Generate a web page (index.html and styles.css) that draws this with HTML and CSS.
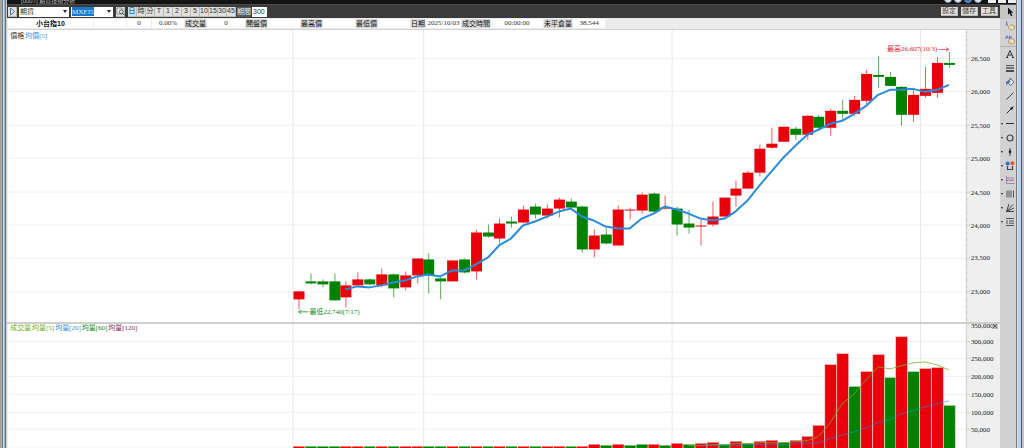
FILE: index.html
```html
<!DOCTYPE html>
<html lang="zh-Hant">
<head>
    <meta charset="UTF-8">
    <title>期貨技術分析</title>
    <link rel="stylesheet" href="styles.css">
</head>
<body>
<div class="window">
    <div class="frame frame-left"></div>
    <div class="pane">
        <header class="title-bar">
            <span class="title-text">[0007] 期貨技術分析</span>
            <div class="title-btns">
                <i class="dot"></i><i class="dot"></i><i class="dot blue"></i><i class="dot"></i>
                <i class="box first"></i><i class="box"></i><i class="box"></i>
            </div>
        </header>
        <div class="work">
            <main class="main">
                <div class="toolbar">
                    <button class="btn play" aria-label="播放">
                        <svg viewBox="0 0 9 9"><path d="M2.5 1v7l4-3.5z" fill="#dff0ff" stroke="#1d4f86" stroke-width=".8"/></svg>
                    </button>
                    <div class="combo combo-kind">
                        <select aria-label="類別"><option>期貨</option></select>
                        <i class="arrow"></i>
                    </div>
                    <div class="combo combo-code">
                        <input class="selected" type="text" value="MXFJ5" aria-label="商品代碼">
                        <i class="arrow"></i>
                    </div>
                    <button class="btn find" aria-label="查詢">
                        <svg viewBox="0 0 9 9"><path d="M1 1h5v6H1z" fill="#f7f7f7" stroke="#666" stroke-width=".7"/><circle cx="5.2" cy="4.8" r="2" fill="#cfe6d8" stroke="#445" stroke-width=".8"/><path d="M6.6 6.3l2 2" stroke="#333"/></svg>
                    </button>
                    <div class="periods">
                        <button class="btn on">日</button>
                        <button class="btn">時</button>
                        <button class="btn">分</button>
                        <button class="btn">T</button>
                        <button class="btn">1</button>
                        <button class="btn">2</button>
                        <button class="btn">3</button>
                        <button class="btn">5</button>
                        <button class="btn">10</button>
                        <button class="btn">15</button>
                        <button class="btn">30</button>
                        <button class="btn">45</button>
                    </div>
                    <label class="range"><span>期間</span> <input type="text" value="300"></label>
                    <div class="actions">
                        <button class="btn">設定</button>
                        <button class="btn">儲存</button>
                        <button class="btn">工具</button>
                    </div>
                </div>
                <div class="quote">
                    <b class="val name">小台指10</b>
                    <span class="val w32"></span>
                    <span class="val w24">0</span>
                    <span class="val w32">0.00%</span>
                    <span class="key">成交量</span><span class="val w38">0</span>
                    <span class="key">開盤價</span><span class="val w32"></span>
                    <span class="key">最高價</span><span class="val w32"></span>
                    <span class="key">最低價</span><span class="val w32"></span>
                    <span class="key date">日期</span><span class="val w35">2025/10/03</span>
                    <span class="key long">成交時間</span><span class="val w52">00:00:00</span>
                    <span class="key long">未平倉量</span><span class="val w32">38,544</span>
                </div>
                <svg class="chart" id="price" viewBox="7 29 993 293">
                    <text class="legend" x="9" y="37"><tspan fill="#333">價格</tspan><tspan fill="#2f8fdc" dx="1">均價[5]</tspan></text>
                </svg>
                <div class="split"></div>
                <svg class="chart" id="volume" viewBox="7 324 993 124">
                    <text class="legend" x="9" y="330"><tspan fill="#6fae1c">成交量</tspan><tspan fill="#6fae1c" dx="1">均量[5]</tspan><tspan fill="#2f8fdc" dx="1">均量[20]</tspan><tspan fill="#0f8a1e" dx="1">均量[60]</tspan><tspan fill="#8e2560" dx="1">均量[120]</tspan></text>
                </svg>
            </main>
            <nav class="tools">
                <button class="tool active" aria-label="選取"><svg viewBox="0 0 10 10"><path d="M3 .5v7.2l1.7-1.5L6 9.3l1.4-.7L6 5.700h2.300z" fill="#111"/></svg></button>
                <button class="tool" aria-label="刪除一條"><svg viewBox="0 0 10 10"><path d="M3.500 6L6 3.500l3.500 1.700v2L7 9.200 3.500 7.500z" fill="#f5dfb2" stroke="#a07c45" stroke-width=".7"/><path d="M1.800.5v3.500M.8 4h2" stroke="#5a62c8"/></svg></button>
                <button class="tool line-below" aria-label="刪除全部"><svg viewBox="0 0 10 10"><path d="M3.500 6L6 3.500l3.500 1.700v2L7 9.200 3.500 7.500z" fill="#f5dfb2" stroke="#a07c45" stroke-width=".7"/><path d="M.5 3.800L2 .8l1.300 3M4.500.8v3M6 .8v2.500" stroke="#5a62c8" fill="none"/></svg></button>
                <button class="tool" aria-label="文字"><svg viewBox="0 0 10 10"><path d="M1.800 8.500L5 1.500l3.200 7M3 6h4M1 8.500h2M7 8.500h2" stroke="#333" fill="none"/></svg></button>
                <button class="tool" aria-label="線寬"><svg viewBox="0 0 10 10"><path d="M1 2.500h8" stroke="#333" stroke-width=".8"/><path d="M1 5h8" stroke="#333" stroke-width="1.200"/><path d="M1 8h8" stroke="#333" stroke-width="1.700"/></svg></button>
                <button class="tool" aria-label="顏色"><svg viewBox="0 0 10 10"><path d="M2.500 4.500L6 1.800l3 3.500-3.800 3.300z" fill="#e6edf5" stroke="#4c5c78" stroke-width=".8"/><path d="M1 6.500C1 4 3 3 5.500 4.500L4 6 2.500 6.500 2 8.500z" fill="#3f6fb0"/><path d="M4.500 4.500V1.500h2" stroke="#667" stroke-width=".7" fill="none"/></svg></button>
                <button class="tool" aria-label="線段"><svg viewBox="0 0 10 10"><path d="M1.500 8.500l7-7" stroke="#444"/></svg></button>
                <button class="tool" aria-label="箭頭"><svg viewBox="0 0 10 10"><path d="M1.500 8.500l5-5" stroke="#333"/><path d="M8.700 1.300L4.800 3l2.200 2.200z" fill="#222"/></svg></button>
                <button class="tool more" aria-label="水平線"><svg viewBox="0 0 10 10"><path d="M1 4.500h8" stroke="#333"/></svg></button>
                <button class="tool more" aria-label="圓形"><svg viewBox="0 0 10 10"><circle cx="5" cy="5" r="3" fill="none" stroke="#444" stroke-width="1.200"/></svg></button>
                <button class="tool more" aria-label="標記"><svg viewBox="0 0 10 10"><path d="M5 1v8" stroke="#333" stroke-width=".8"/><path d="M5 2L3.500 5 5 7l1.500-2z" fill="#222"/></svg></button>
                <button class="tool more" aria-label="磁鐵"><svg viewBox="0 0 10 10"><circle cx="2.600" cy="2.500" r="2" fill="#1c6fd6"/><circle cx="7.400" cy="2.300" r="2" fill="#f0541e"/><path d="M2.500 5v3.500h5V5" stroke="#445" stroke-width="1.200" fill="none"/></svg></button>
                <button class="tool more" aria-label="回歸"><svg viewBox="0 0 10 10"><path d="M1.500 1v7.500h8M1.500 3h7.500" stroke="#777" stroke-width=".7" fill="none"/><path d="M1.500 6l2-1.200 2 1 1.500-1 2 .7" stroke="#cf3fd0" fill="none"/></svg></button>
                <button class="tool more" aria-label="週期線"><svg viewBox="0 0 10 10"><path d="M2 1.500v7M4 1.500v7M6 1.500v7M8.500 1.500v7" stroke="#444" stroke-width=".9"/></svg></button>
                <button class="tool more" aria-label="扇形線"><svg viewBox="0 0 10 10"><path d="M1.500 8.500L4 1M1.500 8.500L8 1.500M1.500 8.500L9 5M1.500 8.500h7.500" stroke="#333" stroke-width=".9"/></svg></button>
                <button class="tool more" aria-label="黃金分割"><svg viewBox="0 0 10 10"><path d="M1 1.500h8M1 8.500h8M4 4h5M4 6.200h5M2 3v4" stroke="#444" stroke-width=".9"/></svg></button>
            </nav>
        </div>
    </div>
    <div class="frame frame-right"></div>
</div>
<script src="chart.js"></script>
</body>
</html>
```
FILE: styles.css
```css
*{
    margin: 0;
    padding: 0;
    box-sizing: border-box;
}
body{
    height: 100vh;
    overflow: hidden;
    background: #efefef;
    font: 7px/10px "Liberation Sans", "Noto Sans CJK TC", sans-serif;
    color: #333;
}
button,
input,
select{
    font: inherit;
    color: inherit;
    border: 0;
    border-radius: 0;
    outline: 0;
}
.window{
    display: flex;
    height: 100vh;
}
.frame{
    flex: none;
}
.frame-left{
    width: 7px;
    background: linear-gradient(to right, #a5a5a5 0 2px, #7d7d7d 2px 3px, #c5d9ee 3px 4px, #8dbbe4 4px 5px, #6f7680 5px 6px, #c9c9c9 6px);
}
.frame-right{
    width: 8px;
    background: linear-gradient(to right, #777 0 1px, #d8e2ea 1px 2px, #b4d4f0 2px 5px, #55595f 5px 6px, #c9c2cf 6px);
}
.pane{
    flex: 1;
    min-width: 0;
    display: flex;
    flex-direction: column;
}

/* 標題列 */
.title-bar{
    flex: none;
    display: flex;
    justify-content: space-between;
    align-items: flex-end;
    height: 5px;
    padding-left: 14px;
    overflow: hidden;
    background: linear-gradient(#141414 0 4px, #4c4c4c 4px);
    color: #bbb;
}
.title-text{
    font-size: 6px;
    line-height: 8px;
}
.title-btns{
    display: flex;
    align-items: flex-end;
    gap: 2px;
    padding-bottom: 2px;
}
.dot{
    width: 8px;
    height: 8px;
    border-radius: 50%;
    background: #e4ebf2;
    border: 1px solid #8c9aab;
}
.dot.blue{
    background: #2e74cf;
}
.box{
    width: 8px;
    height: 8px;
    background: #eee;
}
.box.first{
    margin-left: 4px;
}

.work{
    flex: 1;
    min-height: 0;
    display: flex;
}
.main{
    flex: 1;
    min-width: 0;
    display: flex;
    flex-direction: column;
}

/* 工具列 */
.toolbar{
    flex: none;
    display: flex;
    align-items: center;
    height: 13px;
    padding: 0 2px 0 1px;
    background: #3b3b3b;
}
.btn{
    display: flex;
    align-items: center;
    justify-content: center;
    width: 9px;
    height: 10px;
    background: #e2e0dc;
    border: 1px solid #bdbbb7;
    border-width: 0 1px 1px 0;
}
.btn svg{
    flex: none;
    width: 9px;
    height: 9px;
}
.btn.on{
    background: #c2e4ea;
}
.combo{
    display: flex;
    align-items: center;
    height: 10px;
    background: #fff;
}
.combo-kind{
    width: 50px;
    margin: 0 2px;
}
.combo-code{
    width: 42px;
    padding-left: 1px;
    margin-right: 3px;
    justify-content: space-between;
}
.combo select{
    flex: 1;
    height: 10px;
    padding-left: 1px;
    appearance: none;
    background: #fff;
}
.combo .selected{
    width: 22px;
    height: 9px;
    background: #1a78c8;
    color: #d9efff;
    font-family: "Liberation Serif", serif;
}
.arrow{
    width: 0;
    margin-right: 2px;
    border: 2px solid transparent;
    border-top: 3px solid #222;
    border-bottom: 0;
}
.periods{
    display: flex;
    margin: 0 1px 0 3px;
}
.range{
    display: flex;
    align-items: center;
    gap: 1px;
    color: #eee;
}
.range span{
    background: #5a5a5a;
}
.range input{
    width: 15px;
    height: 10px;
    padding-left: 1px;
    background: #fff;
    color: #333;
}
.actions{
    display: flex;
    gap: 3px;
    margin-left: auto;
}
.actions .btn{
    width: 17px;
    height: 9px;
    color: #4a4238;
}

/* 報價列 */
.quote{
    flex: none;
    display: flex;
    align-items: center;
    gap: 1px;
    height: 12px;
    padding-left: 1px;
    background: #ececec;
    border-bottom: 1px solid #d2d2d2;
}
.val,
.key{
    height: 9px;
    line-height: 9px;
    text-align: center;
    white-space: nowrap;
}
.val{
    background: #fff;
    font-family: "Liberation Serif", "Noto Sans CJK TC", serif;
}
.val.name{
    width: 85px;
    font-family: "Liberation Sans", "Noto Sans CJK TC", sans-serif;
    color: #111;
}
.key{
    width: 21px;
    background: #dadada;
    color: #111;
}
.key.date{
    width: 14px;
}
.key.long{
    width: 28px;
}
.w24{
    width: 24px;
}
.w32{
    width: 32px;
}
.w35{
    width: 35px;
}
.w38{
    width: 38px;
}
.w52{
    width: 52px;
}

/* 圖表 */
.chart{
    display: block;
    width: 100%;
    font-family: "Liberation Serif", "Noto Sans CJK TC", serif;
    font-size: 7px;
}
.split{
    flex: none;
    height: 2px;
    background: #cfcfcf;
}
.plot{
    fill: #fff;
}
.grid{
    stroke: #f0f0f0;
}
.vgrid{
    stroke: #e8e8e8;
}
.tick{
    stroke: #cdcdcd;
}
.axis{
    fill: #222;
}
.up{
    fill: #e8000b;
    stroke: #e8000b;
}
.down{
    fill: #008200;
    stroke: #008200;
}
.wick{
    stroke-opacity: .65;
}
.body{
    stroke: none;
}
.bar{
    stroke: #fff;
    stroke-opacity: .5;
}
.avg{
    fill: none;
    stroke: #2a8bdc;
    stroke-width: 2px;
    stroke-linejoin: round;
}
.avg5{
    stroke: #7fae30;
    stroke-width: 1px;
    stroke-opacity: .8;
}
.avg20{
    stroke: #2a8bdc;
    stroke-width: 1px;
    stroke-opacity: .6;
}
.high{
    fill: #e0202a;
}
.low{
    fill: #0c8a14;
}
.high-line{
    fill: none;
    stroke: #e8606a;
}
.low-line{
    fill: none;
    stroke: #4aa850;
}

/* 右側繪圖工具 */
.tools{
    flex: none;
    width: 16px;
    background: #d2d2d2;
}
.tool{
    display: flex;
    align-items: center;
    justify-content: flex-end;
    width: 100%;
    height: 14px;
    padding-right: 1px;
    background: none;
}
.tool svg{
    width: 10px;
    height: 10px;
}
.tool.active{
    background: #c6c6c6;
}
.tool.line-below{
    border-bottom: 1px solid #b0b0b0;
}
.more::before{
    content: "";
    margin-right: auto;
    margin-left: 1px;
    border: 1px solid transparent;
    border-top: 2px solid #222;
    border-bottom: 0;
}
```
FILE: chart.js
```js
var NS = "http://www.w3.org/2000/svg";
var price = document.getElementById("price");
var volume = document.getElementById("volume");
var LEFT = 7;
var RIGHT = 967;
var FIRST = 298;
var STEP = 11.85;

// 每根K線: 漲跌, 實體上緣, 實體下緣, 最高, 最低
var candles = [
    ["u",291,299,291,309], ["d",281,283,273,284], ["d",281,284,279,287], ["d",281,300,273,300],
    ["u",285,297,281,307], ["u",279,285,272,285], ["d",279,284,278,285], ["u",274,285,268,287],
    ["d",274,288,273,297], ["u",275,287,271,290], ["u",258,275,258,283], ["d",259,275,253,293],
    ["d",278,281,277,299], ["u",260,281,260,281], ["d",259,272,258,273], ["u",232,271,229,279],
    ["d",232,236,224,237], ["u",223,238,218,243], ["d",221,223,216,227], ["u",209,222,205,223],
    ["d",206,214,203,218], ["u",208,215,204,218], ["u",199,208,197,217], ["d",201,207,198,207],
    ["d",206,249,205,252], ["u",235,249,229,257], ["d",234,243,227,244], ["u",209,245,205,245],
    ["u",209,210,207,219], ["u",194,210,192,213], ["d",193,211,192,212], ["u",207,208,195,209],
    ["d",208,224,206,235], ["d",223,227,209,233], ["u",225,226,219,245], ["u",216,224,201,226],
    ["u",197,216,197,216], ["u",188,195,180,206], ["u",172,188,170,188], ["u",148,172,144,176],
    ["u",143,147,127,148], ["u",126,141,126,141], ["d",128,134,126,139], ["u",115,134,114,139],
    ["d",116,127,114,128], ["u",110,127,108,135], ["d",110,113,99,119], ["u",99,113,95,115],
    ["u",73,100,69,103], ["d",74,76,55,87], ["d",76,85,71,85], ["d",86,114,85,125],
    ["u",94,114,88,121], ["u",88,95,66,97], ["u",62,92,56,97], ["d",62,64,51,67]
];
var avg = [289,286,287,285,282,280,276,274,276,270,270,264,257,245,238,225,221,216,211,208,216,220,226,228,228,218,213,206,209,213,218,220,218,211,200,185,171,157,145,134,129,123,120,113,105,94,89,89,88,91,89,84];

// 成交量從第24根起
var bars = [
    ["u",447], ["u",445], ["d",446], ["u",445], ["d",446], ["d",445], ["u",445], ["d",446],
    ["u",444], ["d",445], ["u",444], ["u",443], ["d",445], ["u",442], ["d",444], ["u",442],
    ["u",441], ["d",443], ["u",441], ["u",437], ["u",426], ["u",365], ["u",354], ["d",387],
    ["u",372], ["u",355], ["d",378], ["u",337], ["d",372], ["u",369], ["u",368], ["d",406]
];
var avg5 = [446,446,445,445,444,444,443,443,443,442,441,437,423,404,394,380,367,369,366,363,362,365,370];
var avg20 = [446,446,446,446,445,445,445,445,444,444,443,439,435,432,428,423,420,414,411,407,404,401];

function add(svg, name, attrs, text){
    var el = document.createElementNS(NS, name);
    for(var k in attrs){
        el.setAttribute(k, attrs[k]);
    }
    if(text){
        el.textContent = text;
    }
    svg.appendChild(el);
    return el;
}
function line(svg, cls, x1, y1, x2, y2){
    add(svg, "line", {"class": cls, x1: x1, y1: y1, x2: x2, y2: y2});
}
function cx(i){
    return Math.round(FIRST + i * STEP);
}
function curve(svg, cls, list){
    var start = candles.length - list.length;
    var pts = list.map(function(y, i){
        return cx(start + i) + "," + y;
    });
    add(svg, "polyline", {"class": cls, points: pts.join(" ")});
}
function comma(n){
    return String(n).replace(/(\d)(?=(\d{3})+$)/g, "$1,");
}
function grid(svg, top, bottom){
    svg.insertBefore(add(svg, "rect", {"class": "plot", x: LEFT, y: top, width: RIGHT - LEFT, height: bottom - top}), svg.firstChild);
    [292.5, 423.5, 672.5, 921.5].forEach(function(x){
        line(svg, "vgrid", x, top, x, bottom);
    });
    line(svg, "tick", RIGHT + .5, top, RIGHT + .5, bottom);
}
function drawPrice(){
    grid(price, 29, 322);
    for(var i = 0; i < 8; i++){
        var y = Math.round(58 + i * 33.4);
        line(price, "grid", LEFT, y - .5, RIGHT, y - .5);
        line(price, "tick", RIGHT, y - .5, RIGHT + 4, y - .5);
        add(price, "text", {"class": "axis", x: 972, y: y + 2}, comma(26500 - i * 500));
    }
    for(var t = 31; t < 320; t += 6.7){
        line(price, "tick", RIGHT, Math.round(t) + .5, RIGHT + 2, Math.round(t) + .5);
    }
    candles.forEach(function(c, i){
        var cls = c[0] == "u" ? "up" : "down";
        var x = cx(i);
        line(price, cls + " wick", x + .5, c[3], x + .5, c[4]);
        add(price, "rect", {"class": cls + " body", x: x - 5, y: c[1], width: 11, height: c[2] - c[1]});
    });
    curve(price, "avg", avg);
    add(price, "text", {"class": "high", x: 888, y: 50}, "最高26,607(10/3)");
    add(price, "path", {"class": "high-line", d: "M940 48.5h10M947 46.5l3 2-3 2"});
    add(price, "text", {"class": "low", x: 309, y: 314}, "最低22,740(7/17)");
    add(price, "path", {"class": "low-line", d: "M308 311.5h-10M301 309.5l-3 2 3 2"});
}
function drawVolume(){
    grid(volume, 324, 448);
    for(var i = 0; i < 7; i++){
        var y = Math.round(324 + i * 17.7);
        line(volume, "grid", LEFT, y - .5, RIGHT, y - .5);
        line(volume, "tick", RIGHT, y - .5, RIGHT + 4, y - .5);
        add(volume, "text", {"class": "axis", x: 972, y: i ? y + 2 : y + 4}, comma(350000 - i * 50000));
    }
    candles.forEach(function(c, i){
        var b = bars[i - 24] || [c[0], 447];
        add(volume, "rect", {"class": (b[0] == "u" ? "up" : "down") + " bar", x: cx(i) - 5.5, y: b[1] - .5, width: 12, height: 450 - b[1]});
    });
    curve(volume, "avg avg5", avg5);
    curve(volume, "avg avg20", avg20);
    add(volume, "rect", {x: 993, y: 324, width: 6, height: 5, fill: "#bbb"});
    add(volume, "path", {d: "M994 324l4 4M998 324l-4 4", stroke: "#333", "stroke-width": .8});
}
drawPrice();
drawVolume();
```
